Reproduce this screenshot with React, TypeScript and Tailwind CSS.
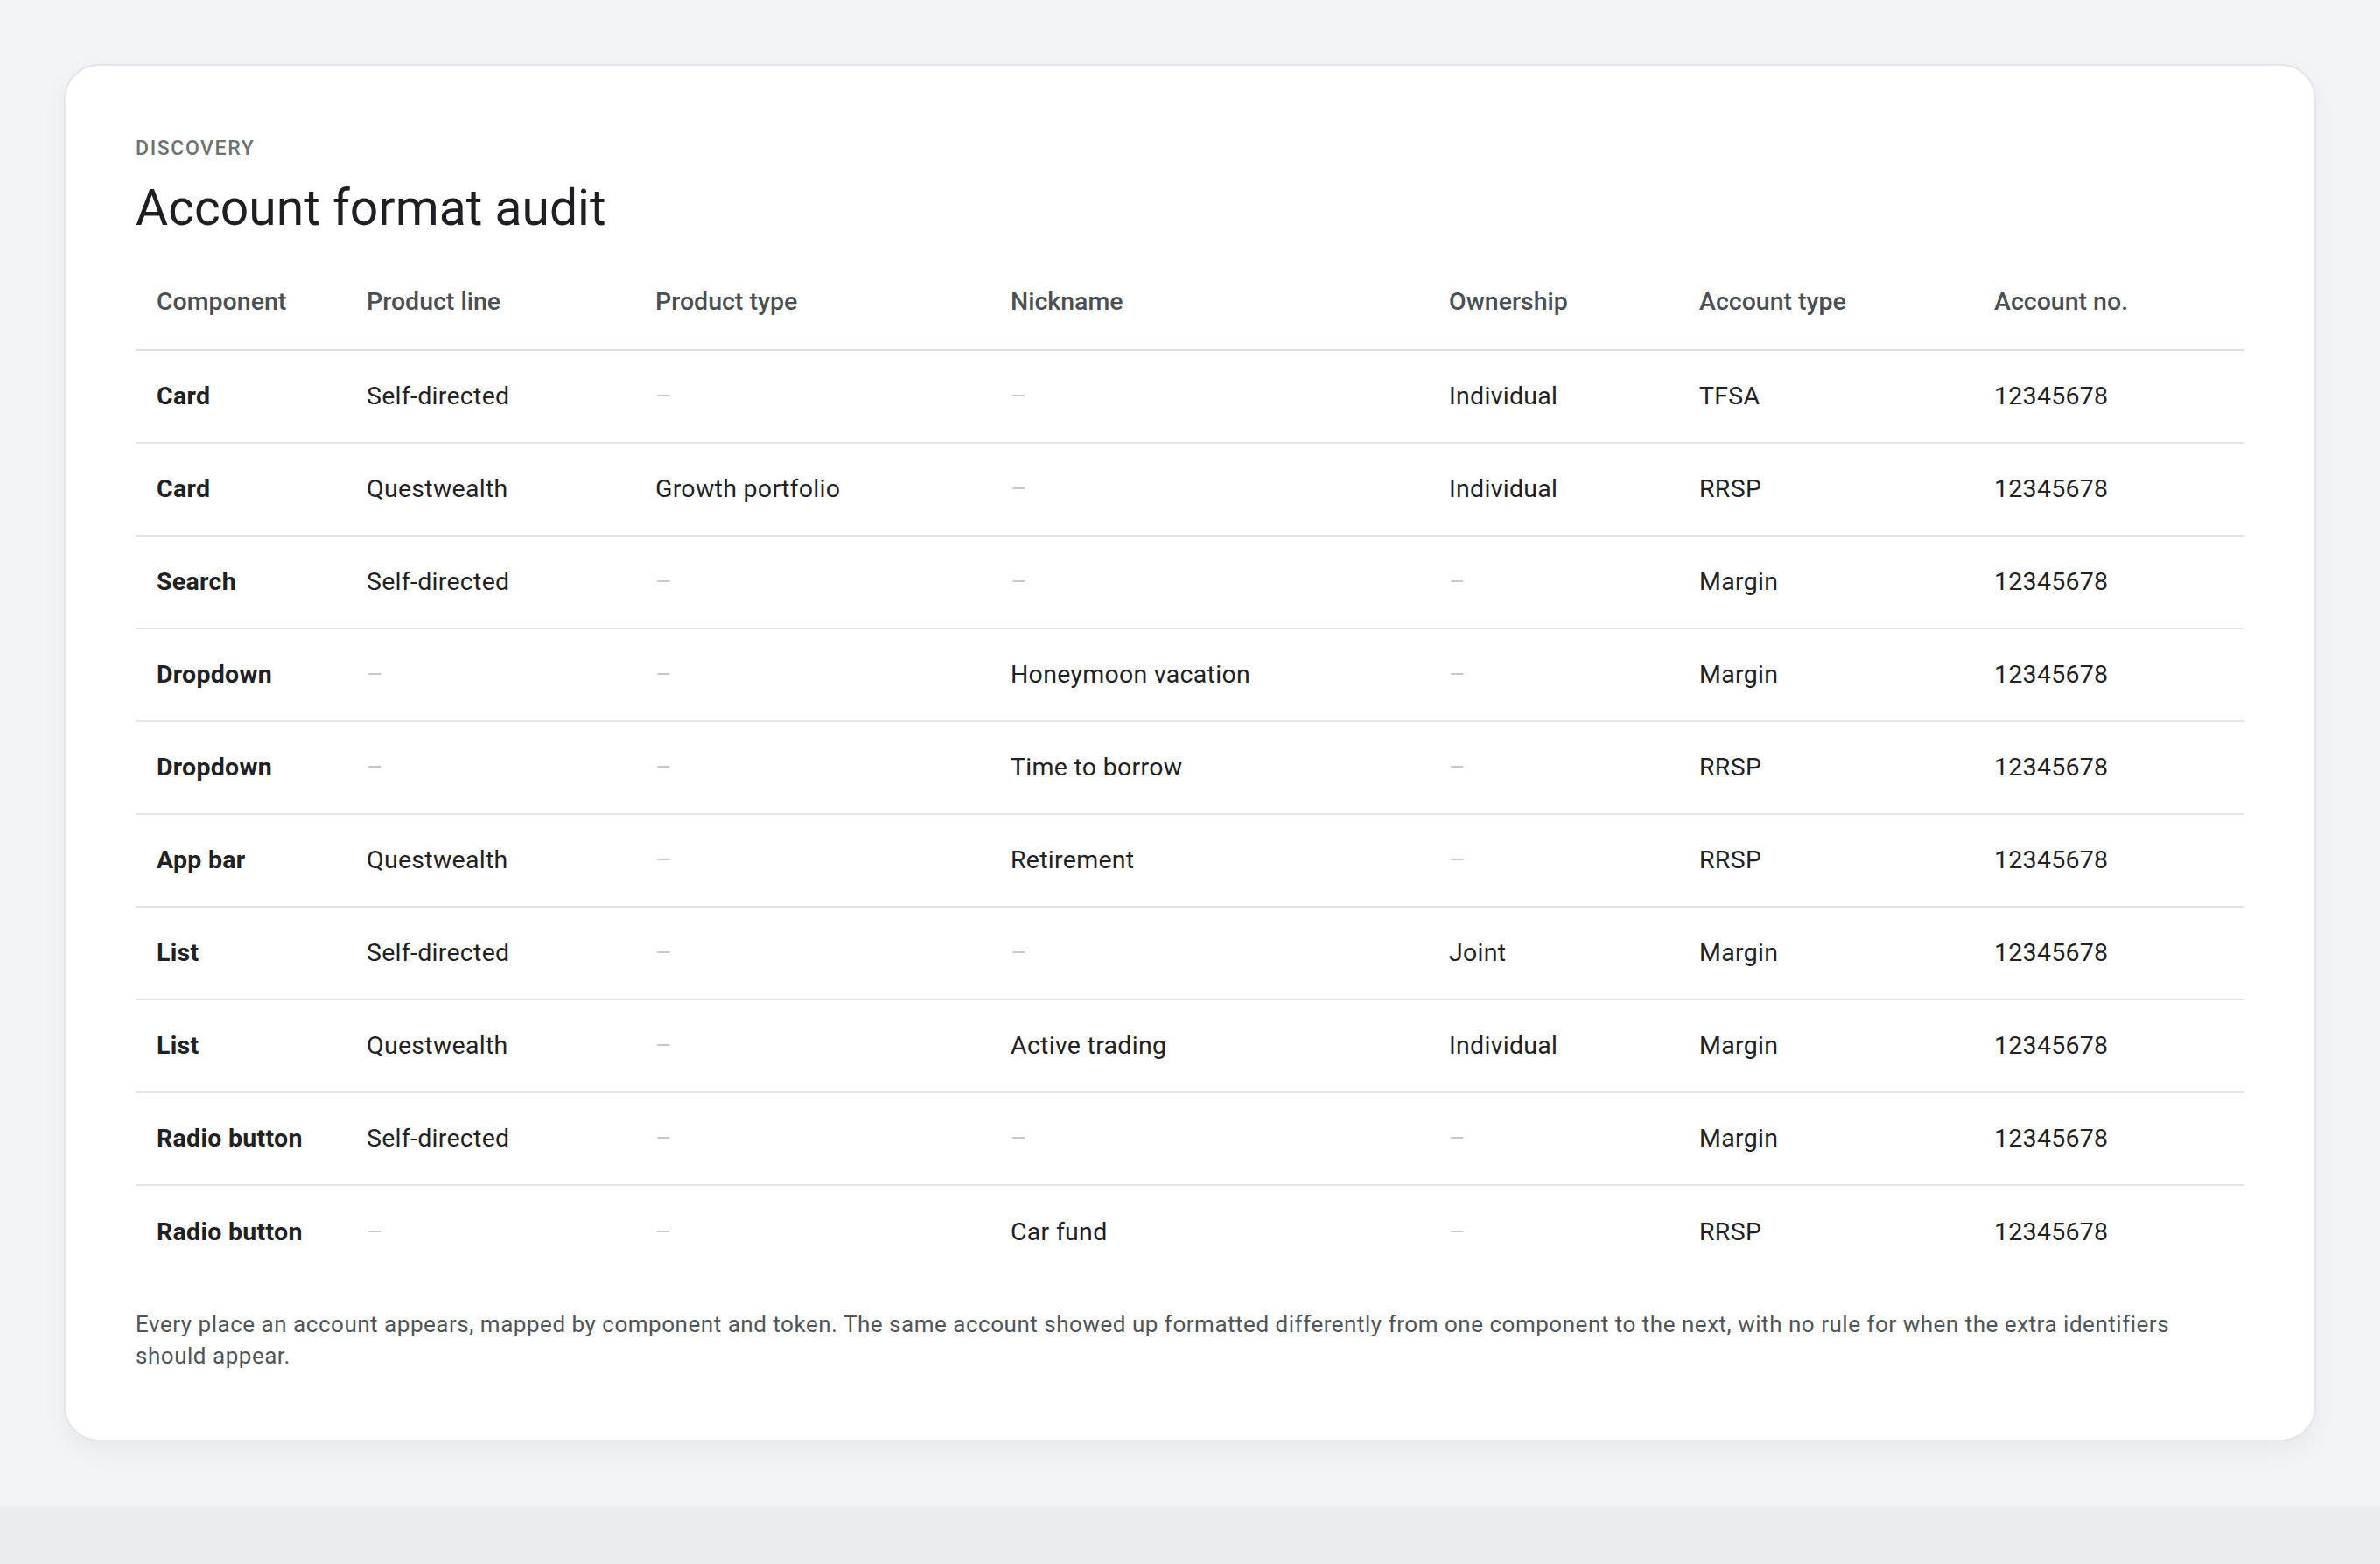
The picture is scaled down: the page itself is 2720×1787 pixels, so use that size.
import React from "react";

const rows = [
  ["Card", "Self-directed", "", "", "Individual", "TFSA", "12345678"],
  ["Card", "Questwealth", "Growth portfolio", "", "Individual", "RRSP", "12345678"],
  ["Search", "Self-directed", "", "", "", "Margin", "12345678"],
  ["Dropdown", "", "", "Honeymoon vacation", "", "Margin", "12345678"],
  ["Dropdown", "", "", "Time to borrow", "", "RRSP", "12345678"],
  ["App bar", "Questwealth", "", "Retirement", "", "RRSP", "12345678"],
  ["List", "Self-directed", "", "", "Joint", "Margin", "12345678"],
  ["List", "Questwealth", "", "Active trading", "Individual", "Margin", "12345678"],
  ["Radio button", "Self-directed", "", "", "", "Margin", "12345678"],
  ["Radio button", "", "", "Car fund", "", "RRSP", "12345678"],
];
const heads = ["Component", "Product line", "Product type", "Nickname", "Ownership", "Account type", "Account no."];
const grid = "grid grid-cols-[240px_330px_406px_501px_286px_337px_1fr]";

export default function App() {
  return (
    <div className="h-[1787px] bg-[#ebecef]" style={{ fontFamily: "Roboto, 'Noto Sans', sans-serif" }}>
      <div className="bg-[#f3f4f7] px-[73px] pt-[73px] pb-[75px]">
        <div className="bg-white rounded-[40px] border-2 border-[#e3e5e8] shadow-[0_10px_30px_rgba(0,0,0,0.05)] px-[80px] pt-[80px] pb-[78px]">
          <div className="text-[23px] tracking-[0.07em] text-[#6b7270] font-medium leading-[30px]">DISCOVERY</div>
          <h1 className="text-[57px] text-[#1d1f22] leading-[66px] mt-[20px]">Account format audit</h1>
          <div className="mt-[20px]">
            <div className={`${grid} h-[110px] items-center border-b-2 border-[#dde0e3] text-[28.5px] font-medium text-[#4a4f55]`}>
              {heads.map((h) => (
                <div key={h} className="px-6">{h}</div>
              ))}
            </div>
            {rows.map((r, i) => (
              <div key={i} className={`${grid} h-[106px] items-center text-[28.5px] text-[#1f2124] tracking-[0.01em] ${i < rows.length - 1 ? "border-b-2 border-[#e3e5e8]" : ""}`}>
                {r.map((c, j) => (
                  <div key={j} className={`px-6 ${j === 0 ? "font-bold" : ""}`}>
                    {c === "" ? <span className="text-[#c4c7cb]">–</span> : c}
                  </div>
                ))}
              </div>
            ))}
          </div>
          <p className="mt-[34px] text-[26px] leading-[36px] text-[#50555a] tracking-[0.02em]">
            Every place an account appears, mapped by component and token. The same account showed up formatted differently from one component to the next, with no rule for when the extra identifiers should appear.
          </p>
        </div>
      </div>
    </div>
  );
}
